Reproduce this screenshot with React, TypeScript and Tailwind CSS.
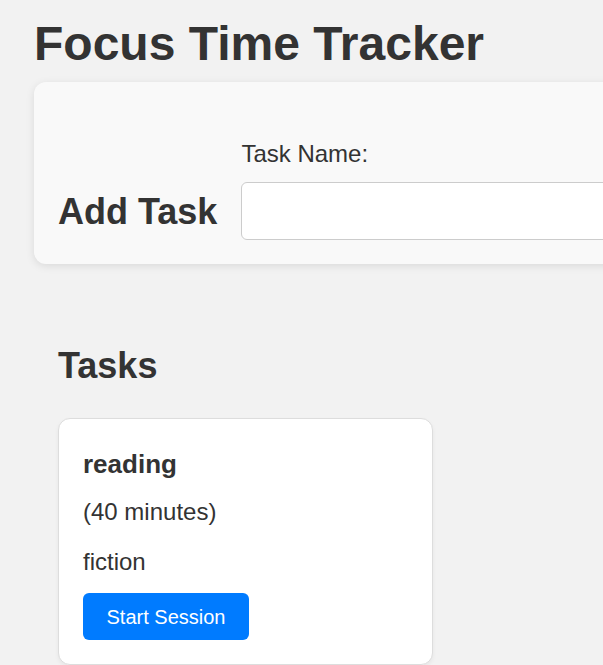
export default function App() {
  return (
    <div className="h-screen w-screen overflow-hidden bg-[#f2f2f2] font-['Liberation_Sans',Arial,sans-serif] text-[#333]">
      <h1 className="pl-[34px] pt-4 text-[48px] font-bold leading-[55px]">Focus Time Tracker</h1>

      <section className="ml-[34px] mt-[11px] flex h-[182px] w-[900px] items-end gap-6 rounded-xl bg-[#f9f9f9] p-6 shadow-[0_2px_8px_rgba(0,0,0,0.1)]">
        <h2 className="mb-2 shrink-0 text-[36px] font-bold leading-[41px]">Add Task</h2>
        <div className="flex flex-col">
          <label className="text-[24px] leading-[28px]">Task Name:</label>
          <input
            type="text"
            className="mt-[14px] h-[58px] w-[500px] rounded-md border border-[#ccc] bg-white px-3 text-[24px] outline-none"
          />
        </div>
      </section>

      <section className="ml-[58px] mt-[81px]">
        <h2 className="text-[36px] font-bold leading-[41px]">Tasks</h2>

        <div className="mt-8 w-[375px] rounded-xl border border-[#ddd] bg-white px-6 pb-6 pt-[30px] shadow-[0_2px_4px_rgba(0,0,0,0.05)]">
          <h3 className="text-[26px] font-bold leading-[30px]">reading</h3>
          <p className="mt-[19px] text-[24px] leading-[28px]">(40 minutes)</p>
          <p className="mt-[22px] text-[24px] leading-[28px]">fiction</p>
          <button className="mt-[17px] h-[47px] w-[166px] rounded-md bg-[#007bff] text-[20px] text-white">
            Start Session
          </button>
        </div>
      </section>
    </div>
  );
}
